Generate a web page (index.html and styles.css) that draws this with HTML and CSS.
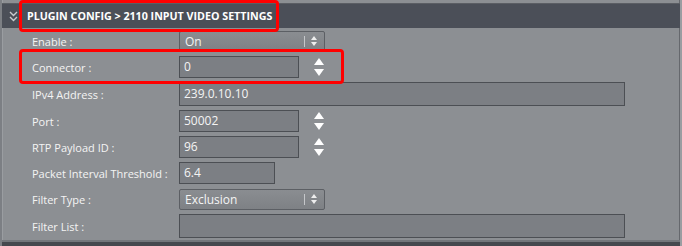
FILE: index.html
```html
<!DOCTYPE html>
<html lang="en">
<head>
    <meta charset="UTF-8">
    <title>Plugin Config</title>
    <link rel="stylesheet" href="styles.css">
</head>
<body>
    <div class="panel">
        <div class="panel-head">
            <svg class="collapse-icon" width="9" height="11" viewBox="0 0 9 11">
                <path d="M1 1 L4.5 4.5 L8 1 M1 6 L4.5 9.5 L8 6" fill="none" stroke="#c9cbce" stroke-width="1.4"/>
            </svg>
            <span class="panel-title">PLUGIN CONFIG &gt; 2110 INPUT VIDEO SETTINGS</span>
        </div>

        <div class="form">
            <div class="row">
                <label>Enable :</label>
                <div class="select">
                    <span>On</span>
                    <span class="select-sep"></span>
                    <span class="select-arrows"><i class="tri-up small"></i><i class="tri-down small"></i></span>
                </div>
            </div>
            <div class="row">
                <label>Connector :</label>
                <div class="field short">0</div>
                <div class="spinner"><i class="tri-up"></i><i class="tri-down"></i></div>
            </div>
            <div class="row tall">
                <label>IPv4 Address :</label>
                <div class="field wide">239.0.10.10</div>
            </div>
            <div class="row">
                <label>Port :</label>
                <div class="field short">50002</div>
                <div class="spinner"><i class="tri-up"></i><i class="tri-down"></i></div>
            </div>
            <div class="row">
                <label>RTP Payload ID :</label>
                <div class="field short">96</div>
                <div class="spinner"><i class="tri-up"></i><i class="tri-down"></i></div>
            </div>
            <div class="row">
                <label>Packet Interval Threshold :</label>
                <div class="field small-field">6.4</div>
            </div>
            <div class="row">
                <label>Filter Type :</label>
                <div class="select">
                    <span>Exclusion</span>
                    <span class="select-sep"></span>
                    <span class="select-arrows"><i class="tri-up small"></i><i class="tri-down small"></i></span>
                </div>
            </div>
            <div class="row tall">
                <label>Filter List :</label>
                <div class="field wide"></div>
            </div>
        </div>

        <!-- highlight boxes drawn over the panel -->
        <div class="mark mark-head"></div>
        <div class="mark mark-connector"></div>
    </div>
</body>
</html>
```

FILE: styles.css
```css
body {
    margin: 0;
    background-color: #8c8f93;
    font-family: "Open Sans", "Noto Sans", sans-serif;
    color: #f4f4f4;
}

.panel {
    position: relative;
    width: 682px;
    height: 246px;
    box-sizing: border-box;
    padding-top: 3px;
    border-left: 2px solid #7c7f84;
    border-right: 2px solid #9a9da1;
    box-shadow: inset -1px 0 0 #65686d, inset 1px 0 0 #9a9da1;
    overflow: hidden;
}

.panel-head {
    height: 25px;
    background-color: #4b4f58;
    border-top: 1px solid #5b5e64;
    display: flex;
    align-items: center;
    padding-left: 7px;
    box-sizing: border-box;
}

.collapse-icon {
    margin-right: 9px;
    margin-top: 1px;
}

.panel-title {
    font-size: 10.7px;
    font-weight: bold;
    color: #ffffff;
}

.form {
    padding-left: 30px;
    height: 212px;
    border-bottom: 2px solid #73767b;
    box-shadow: 0 2px 0 #45484e, 0 6px 0 #45484e;
}

.row {
    height: 26px;
    display: flex;
    align-items: center;
}

.row.tall {
    height: 28px;
}

.row label {
    width: 147px;
    font-size: 11px;
    white-space: nowrap;
}

.field {
    height: 22px;
    box-sizing: border-box;
    border: 1px solid #4c4f54;
    background-color: #7c7f84;
    font-size: 12px;
    line-height: 20px;
    padding-left: 4px;
}

.field.short {
    width: 120px;
}

.field.small-field {
    width: 96px;
}

.field.wide {
    width: 446px;
    height: 24px;
    line-height: 22px;
}

.select {
    width: 146px;
    height: 21px;
    box-sizing: border-box;
    border: 1px solid #5c5f64;
    border-radius: 2px;
    background: linear-gradient(#8a8d91, #7e8185);
    font-size: 12px;
    display: flex;
    align-items: center;
    padding-left: 5px;
}

.select span:first-child {
    flex: 1;
}

.select-sep {
    width: 1px;
    height: 11px;
    background-color: #c5c7ca;
    margin-right: 6px;
}

.select-arrows {
    display: flex;
    flex-direction: column;
    gap: 2px;
    margin-right: 7px;
}

.spinner {
    display: flex;
    flex-direction: column;
    gap: 4px;
    margin-left: 15px;
}

.tri-up, .tri-down {
    display: block;
    width: 0;
    height: 0;
    border-left: 5px solid transparent;
    border-right: 5px solid transparent;
}

.tri-up {
    border-bottom: 7px solid #ffffff;
}

.tri-down {
    border-top: 7px solid #ffffff;
}

.tri-up.small, .tri-down.small {
    border-left-width: 3px;
    border-right-width: 3px;
}

.tri-up.small {
    border-bottom: 4px solid #eeeeee;
}

.tri-down.small {
    border-top: 4px solid #eeeeee;
}

.mark {
    position: absolute;
    border: 3px solid #ff0000;
    border-radius: 4px;
}

.mark-head {
    left: 17px;
    top: 0;
    width: 254px;
    height: 26px;
}

.mark-connector {
    left: 17px;
    top: 49px;
    width: 319px;
    height: 29px;
}
```
